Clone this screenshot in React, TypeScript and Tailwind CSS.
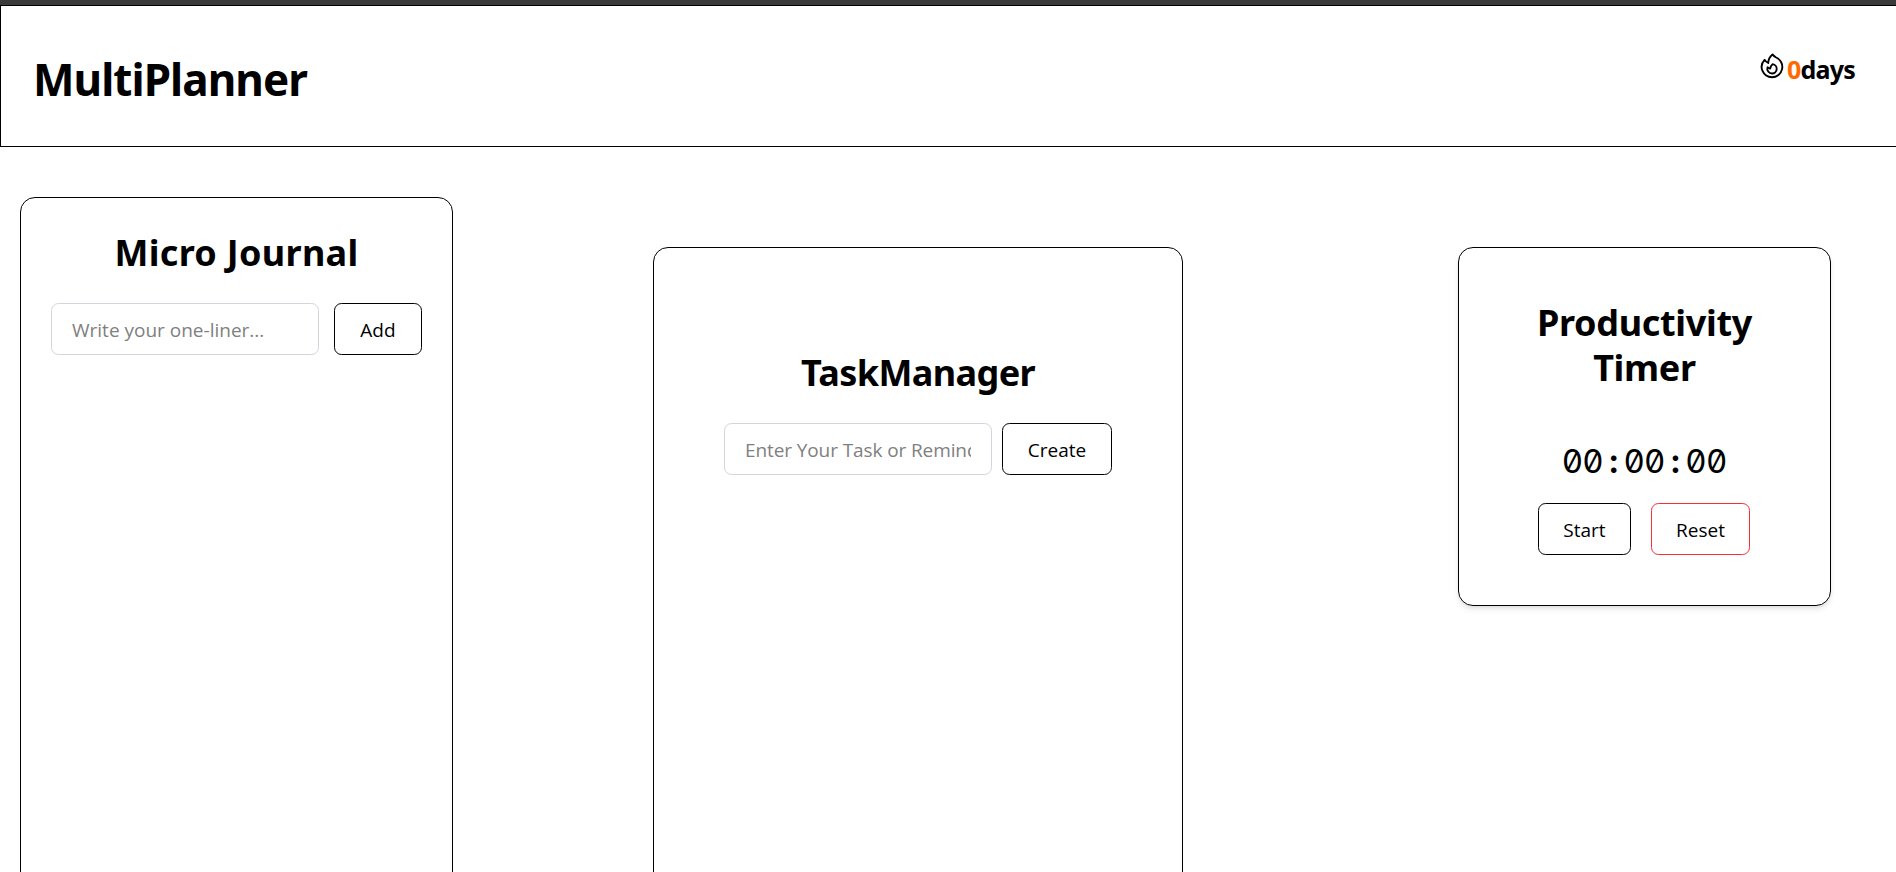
import React from "react";

const inputClass =
  "h-[52px] w-[268px] shrink-0 rounded-[7.5px] border border-gray-300 bg-white px-5 pt-[2px] font-['Open_Sans'] text-[19px] leading-[30px] placeholder:text-[#808080] outline-none";
const buttonClass =
  "flex h-[52px] shrink-0 items-center justify-center rounded-[7.5px] border pt-[2px] font-['Open_Sans'] text-[19px] leading-[30px]";

function FlameIcon() {
  return (
    <svg className="size-[30px]" viewBox="0 0 24 24" fill="none" stroke="currentColor" strokeWidth={1.5} strokeLinecap="round" strokeLinejoin="round">
      <path d="M15.362 5.214A8.252 8.252 0 0 1 12 21 8.25 8.25 0 0 1 6.038 7.047 8.287 8.287 0 0 0 9 9.601a8.983 8.983 0 0 1 3.361-6.867 8.21 8.21 0 0 0 3 2.48Z" />
      <path d="M12 18a3.75 3.75 0 0 0 .495-7.468 5.99 5.99 0 0 0-1.925 3.547 5.975 5.975 0 0 1-2.133-1.001A3.75 3.75 0 0 0 12 18Z" />
    </svg>
  );
}

function Header() {
  return (
    <header className="flex h-[142px] w-[1900px] items-start justify-between border border-black pl-8 pr-[44px]">
      <h1 className="pt-[43px] text-[44px] font-bold leading-[60px] tracking-[-0.95px]">MultiPlanner</h1>
      <div className="flex pt-[45px]">
        <FlameIcon />
        <p className="pt-px text-[25px] font-bold leading-[35px] tracking-[-0.8px]">
          <span className="text-[#ff6900]">0</span>days
        </p>
      </div>
    </header>
  );
}

function MicroJournal() {
  return (
    <section className="ml-5 mt-[50px] h-[900px] w-[433px] shrink-0 rounded-[15px] border border-black px-[30px] pt-8">
      <h2 className="text-center text-[36px] font-bold leading-[45px] tracking-[0.3px]">Micro Journal</h2>
      <div className="mt-7 flex gap-[15px]">
        <input className={inputClass} placeholder="Write your one-liner..." />
        <button className={`${buttonClass} w-[88px] border-black`}>Add</button>
      </div>
    </section>
  );
}

function TaskManager() {
  return (
    <section className="ml-[200px] mt-[100px] h-[900px] w-[530px] shrink-0 rounded-[15px] border border-black px-[70px] pt-[102px]">
      <h2 className="text-center text-[36px] font-bold leading-[45px] tracking-[-0.6px]">TaskManager</h2>
      <div className="mt-7 flex gap-[10px]">
        <input className={`${inputClass} tracking-[-0.1px]`} placeholder="Enter Your Task or Reminder" />
        <button className={`${buttonClass} w-[110px] border-black`}>Create</button>
      </div>
    </section>
  );
}

function ProductivityTimer() {
  return (
    <section className="ml-[275px] mt-[100px] h-[359px] w-[373px] shrink-0 rounded-[15px] border border-black px-[50px] pt-[52px] shadow-md">
      <h2 className="text-center text-[36px] font-bold leading-[45px] tracking-[-0.3px]">
        Productivity
        <br />
        Timer
      </h2>
      <div className="mt-[49px] flex h-[45px] justify-center font-['Inter'] text-[33px] leading-[45px] [font-feature-settings:'zero','tnum']">
        {"00:00:00".split("").map((c, i) => (
          <span key={i} className={c === ":" ? "flex w-[20.6px] justify-center font-bold" : "flex w-[20.6px] justify-center"}>
            {c}
          </span>
        ))}
      </div>
      <div className="mt-[19px] flex gap-5 pl-[29px]">
        <button className={`${buttonClass} w-[93px] border-black`}>Start</button>
        <button className={`${buttonClass} w-[99px] border-[#fb2c36]`}>Reset</button>
      </div>
    </section>
  );
}

export default function App() {
  return (
    <div className="h-[872px] w-full overflow-hidden bg-white font-['Noto_Sans',sans-serif] text-black">
      <div className="h-[5px] bg-[#3b3b3b]" />
      <Header />
      <main className="flex items-start">
        <MicroJournal />
        <TaskManager />
        <ProductivityTimer />
      </main>
    </div>
  );
}
